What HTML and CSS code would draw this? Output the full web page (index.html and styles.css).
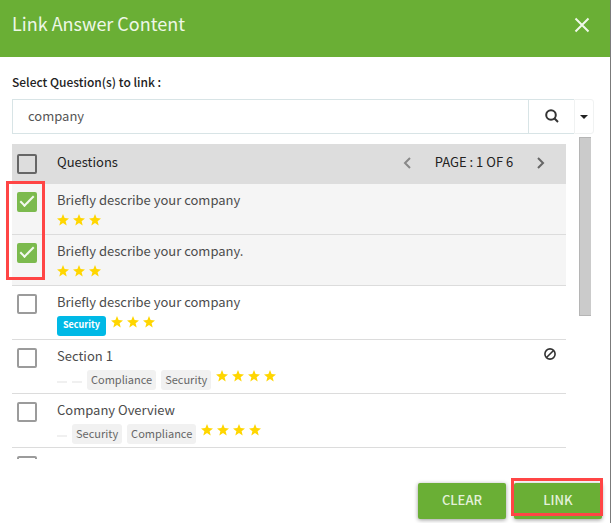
FILE: index.html
```html
<!DOCTYPE html>
<html lang="en">
<head>
  <meta charset="UTF-8">
  <meta name="viewport" content="width=device-width, initial-scale=1.0">
  <title>Link Answer Content</title>
  <link rel="stylesheet" href="styles.css">
</head>
<body>
  <!-- shared icons -->
  <svg class="sprite" aria-hidden="true">
    <symbol id="star" viewBox="0 0 12 12">
      <path d="M6 0l1.6 4.1 4.4.3-3.4 2.8 1.1 4.3L6 9.1l-3.7 2.4 1.1-4.3L0 4.4l4.4-.3z"/>
    </symbol>
  </svg>

  <div class="modal">
    <header class="modal-header">
      <h1>Link Answer Content</h1>
      <button class="close" type="button" aria-label="Close">
        <svg width="16" height="16" viewBox="0 0 16 16"><path d="M1.5 1.5l13 13M14.5 1.5l-13 13"/></svg>
      </button>
    </header>

    <div class="modal-body">
      <label class="search-label" for="search">Select Question(s) to link :</label>
      <div class="search">
        <input id="search" class="search-input" type="text" value="company">
        <button class="search-btn" type="button" aria-label="Search">
          <svg width="14" height="14" viewBox="0 0 14 14"><circle cx="6" cy="6" r="4.8"/><path d="M9.3 9.3l3.7 3.7"/></svg>
        </button>
        <button class="search-more" type="button" aria-label="Search options">
          <svg width="8" height="4" viewBox="0 0 8 4"><path d="M0 0h8L4 4z"/></svg>
        </button>
      </div>

      <div class="list-area">
        <div class="question-list">
          <table class="questions">
            <thead>
              <tr>
                <th class="col-check"><input type="checkbox" class="check" aria-label="Select all"></th>
                <th class="col-title">Questions</th>
                <th class="col-end">
                  <div class="pager">
                    <button class="page-btn prev" type="button" aria-label="Previous page">
                      <svg width="8" height="12" viewBox="0 0 8 12"><path d="M7 1L2 6l5 5"/></svg>
                    </button>
                    <span>PAGE : 1 OF 6</span>
                    <button class="page-btn" type="button" aria-label="Next page">
                      <svg width="8" height="12" viewBox="0 0 8 12"><path d="M1 1l5 5-5 5"/></svg>
                    </button>
                  </div>
                </th>
              </tr>
            </thead>
            <tbody>
              <tr class="selected">
                <td class="col-check"><input type="checkbox" class="check" id="q1" checked></td>
                <td>
                  <label class="title" for="q1">Briefly describe your company</label>
                  <div class="meta">
                    <span class="stars"><svg><use href="#star"/></svg><svg><use href="#star"/></svg><svg><use href="#star"/></svg></span>
                  </div>
                </td>
                <td class="col-end"></td>
              </tr>
              <tr class="selected">
                <td class="col-check"><input type="checkbox" class="check" id="q2" checked></td>
                <td>
                  <label class="title" for="q2">Briefly describe your company.</label>
                  <div class="meta">
                    <span class="stars"><svg><use href="#star"/></svg><svg><use href="#star"/></svg><svg><use href="#star"/></svg></span>
                  </div>
                </td>
                <td class="col-end"></td>
              </tr>
              <tr>
                <td class="col-check"><input type="checkbox" class="check" id="q3"></td>
                <td>
                  <label class="title" for="q3">Briefly describe your company</label>
                  <div class="meta">
                    <span class="tag tag-blue">Security</span>
                    <span class="stars"><svg><use href="#star"/></svg><svg><use href="#star"/></svg><svg><use href="#star"/></svg></span>
                  </div>
                </td>
                <td class="col-end"></td>
              </tr>
              <tr>
                <td class="col-check"><input type="checkbox" class="check" id="q4"></td>
                <td>
                  <label class="title" for="q4">Section 1</label>
                  <div class="meta">
                    <span class="tag-empty"></span>
                    <span class="tag-empty"></span>
                    <span class="tag">Compliance</span>
                    <span class="tag">Security</span>
                    <span class="stars"><svg><use href="#star"/></svg><svg><use href="#star"/></svg><svg><use href="#star"/></svg><svg><use href="#star"/></svg></span>
                  </div>
                </td>
                <td class="col-end">
                  <svg class="ban" width="12" height="12" viewBox="0 0 12 12"><circle cx="6" cy="6" r="5.1"/><path d="M2.5 9.5l7-7"/></svg>
                </td>
              </tr>
              <tr>
                <td class="col-check"><input type="checkbox" class="check" id="q5"></td>
                <td>
                  <label class="title" for="q5">Company Overview</label>
                  <div class="meta">
                    <span class="tag-empty"></span>
                    <span class="tag">Security</span>
                    <span class="tag">Compliance</span>
                    <span class="stars"><svg><use href="#star"/></svg><svg><use href="#star"/></svg><svg><use href="#star"/></svg><svg><use href="#star"/></svg></span>
                  </div>
                </td>
                <td class="col-end"></td>
              </tr>
              <tr>
                <td class="col-check"><input type="checkbox" class="check" aria-label="Select question"></td>
                <td></td>
                <td class="col-end"></td>
              </tr>
            </tbody>
          </table>
        </div>
        <div class="scroll-thumb"></div>
        <div class="highlight highlight-checks"></div>
      </div>
    </div>

    <footer class="modal-footer">
      <button class="btn" type="button">CLEAR</button>
      <div class="btn-wrap">
        <button class="btn" type="button">LINK</button>
        <div class="highlight highlight-link"></div>
      </div>
    </footer>
  </div>
</body>
</html>
```

FILE: styles.css
```css
*, *::after {
  box-sizing: border-box;
}
body {
  margin: 0;
  padding-right: 1px;
  background: #7b7b7b;
  font-family: "Noto Sans CJK SC", "Noto Sans", sans-serif;
  font-size: 13px;
  color: #4c4c4c;
}
button, input {
  margin: 0;
  font: inherit;
}
button {
  padding: 0;
  border: none;
  background: none;
  cursor: pointer;
}
svg {
  display: block;
}
.sprite {
  position: absolute;
  width: 0;
  height: 0;
}

/* modal */
.modal {
  display: flex;
  flex-direction: column;
  height: 100vh;
  background: #fff;
}
.modal-header {
  display: flex;
  justify-content: space-between;
  align-items: center;
  padding: 8px 20px 16px 12px;
  background: #6aaf35;
}
.modal-header h1 {
  margin: 0;
  padding-bottom: 2px;
  font-size: 18px;
  font-weight: 400;
  line-height: 31px;
  color: #eef7e7;
}
.close path {
  fill: none;
  stroke: #f0f8ea;
  stroke-width: 2;
}
.modal-body {
  display: flex;
  flex-direction: column;
  flex: 1;
  min-height: 0;
  padding: 13px 16px 0 12px;
}

/* search box */
.search-label {
  margin-bottom: 5px;
  font-size: 12px;
  font-weight: 500;
  line-height: 24px;
  color: #222;
}
.search {
  display: flex;
  height: 35px;
}
.search-input {
  flex: 1;
  min-width: 0;
  padding: 0 15px 3px;
  border: 1px solid #d8e4e6;
  color: #555;
  outline: none;
}
.search-btn {
  display: flex;
  align-items: center;
  justify-content: center;
  width: 45px;
  padding-bottom: 2px;
  border: 1px solid #d8e4e6;
  border-width: 1px 0;
}
.search-btn svg {
  fill: none;
  stroke: #333;
  stroke-width: 2;
}
.search-more {
  display: flex;
  align-items: center;
  justify-content: center;
  width: 20px;
  border: 1px solid #f0f2f2;
  border-radius: 0 3px 3px 0;
}
.search-more svg {
  fill: #222;
}

/* question list */
.list-area {
  position: relative;
  display: flex;
  gap: 13px;
  flex: 1;
  min-height: 0;
  padding-right: 3px;
  margin-top: 3px;
}
.question-list {
  flex: 1;
  margin-top: 7px;
  overflow: hidden;
}
.questions {
  width: 100%;
  border-collapse: collapse;
}
.questions th, .questions td {
  padding: 0;
  text-align: left;
  vertical-align: top;
}
.questions th {
  height: 40px;
  font-weight: 400;
  color: #222;
  background: #ddd;
}
.questions td {
  padding: 6px 0 3px;
  border-bottom: 1px solid #dcdcdc;
}
.questions .selected td {
  background: #f5f5f5;
}
.questions .col-check {
  width: 45px;
  padding: 8px 0 0 5px;
}
.questions th.col-check {
  padding-top: 10px;
}
.questions .col-title {
  line-height: 36px;
}
.questions .col-end {
  width: 170px;
}
.check {
  display: block;
  appearance: none;
  width: 20px;
  height: 20px;
  border: 2px solid #9b9b9b;
  border-radius: 2px;
}
th .check {
  border-color: #666;
}
.check:checked {
  border-color: #7cba4e;
  background: #7cba4e;
}
.check:checked::after {
  content: "";
  display: block;
  width: 14px;
  height: 7px;
  margin: 2px 1px;
  border: solid #f4faef;
  border-width: 0 0 2px 2px;
  transform: rotate(-45deg);
}
.title {
  display: block;
  margin-bottom: 4px;
  line-height: 20px;
}
.meta {
  display: flex;
  gap: 5px;
  min-height: 17px;
}
.tag {
  padding: 0 4px 2px;
  border-radius: 3px;
  font-size: 11px;
  line-height: 18px;
  color: #666;
  background: #f1f1f1;
}
.tag-blue {
  padding: 0 6px 2px;
  font-size: 9px;
  font-weight: 700;
  color: #fff;
  background: #00b9e6;
}
.tag-empty {
  width: 10px;
  height: 2px;
  margin-top: 11px;
  background: #f0f0f0;
}
.stars {
  display: flex;
  gap: 4px;
}
.stars svg {
  width: 12px;
  height: 12px;
  fill: #ffd600;
}
.ban {
  margin: 2px 10px 0 auto;
  fill: none;
  stroke: #333;
  stroke-width: 1.6;
}
.pager {
  display: flex;
  justify-content: space-between;
  align-items: center;
  padding: 0 21px 0 7px;
  line-height: 36px;
}
.page-btn {
  padding-top: 2px;
}
.page-btn path {
  fill: none;
  stroke: #666;
  stroke-width: 2;
}
.page-btn.prev path {
  stroke: #888;
}
.scroll-thumb {
  width: 12px;
  height: 179px;
  border: 1px solid #b5b5b5;
  border-right: none;
  background: #cbcbcb;
}

/* footer */
.modal-footer {
  display: flex;
  justify-content: flex-end;
  gap: 8px;
  padding: 24px 8px 4px;
}
.btn-wrap {
  position: relative;
}
.btn {
  width: 88px;
  height: 36px;
  padding-bottom: 3px;
  border-radius: 2px;
  font-weight: 500;
  color: #e3f1d9;
  background: #6aaf35;
  box-shadow: 0 1px 4px rgba(0,0,0,0.4);
}

/* red call-out frames */
.highlight {
  position: absolute;
  border: 3px solid #ff4545;
  pointer-events: none;
}
.highlight-checks {
  top: 44px;
  left: -6px;
  width: 39px;
  height: 99px;
}
.highlight-link {
  top: -5px;
  left: -3px;
  width: 92px;
  height: 38px;
}
```
